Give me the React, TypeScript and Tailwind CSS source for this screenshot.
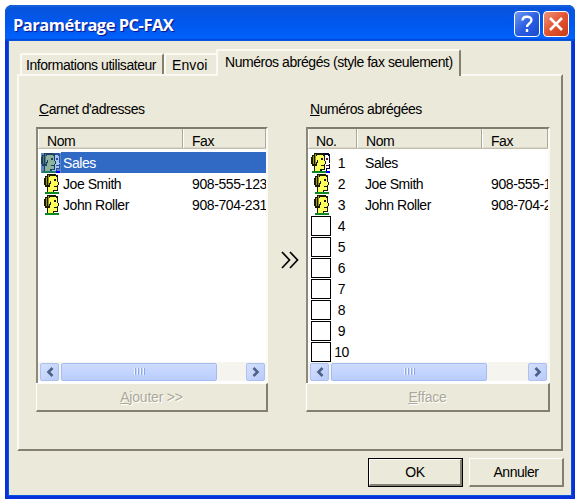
import type { ReactNode } from "react";

type PersonProps = { group?: boolean; selected?: boolean };

function PersonIcon({ group, selected }: PersonProps) {
    const skin = selected ? "#8cb39c" : "#ffff5c";
    const hair = selected ? "#4d7a74" : "#9a9418";
    const line = selected ? "#1d3f66" : "#1a1a00";
    const base = selected ? "#1f7a63" : "#0a8a1e";
    return (
        <svg width="20" height="20" viewBox="0 0 20 20" shapeRendering="crispEdges" className="shrink-0">
            {group && (
                <>
                    <path d="M10 0h8v1h1v15h-3v2h-6z" fill={selected ? "#2a52a4" : "#00002a"} />
                    <path d="M12 2h5v1h1v7h1v1h-1v4h-3v3h-4v-5h1z" fill={selected ? "#a9c6f0" : "#ffffff"} />
                    <path d="M15 5h2v2h-2zM15 12h3v1h-3z" fill={selected ? "#2a52a4" : "#7a1030"} />
                    <path d="M11 18h8v2h-8z" fill="#0000ff" />
                </>
            )}
            <g transform={group ? "translate(-3 0)" : undefined}>
                <path d="M6 0h9v1h2v16h-4v1H6v-5H4v-2H3V4h1V2h2z" fill={line} />
                <path d="M17 8h1v3h-1z" fill={line} />
                <path d="M5 3h1v8H5zM7 1h1v10H7z" fill={hair} />
                <path d="M9 2h6v1h1v5h1v3h-1v5h-4v2H7v-5h2V9H8V3h1z" fill={skin} />
                <path d="M13 5h2v2h-2zM13 12h3v1h-3zM9 7h1v3H9z" fill={line} />
                <path d="M15 5h1v1h-1z" fill={skin} />
                <path d="M4 18h14v2H4z" fill={base} />
            </g>
        </svg>
    );
}

function Arrow({ right }: { right?: boolean }) {
    return (
        <div className="flex h-[18px] w-[19px] shrink-0 items-center justify-center rounded-[2px] border border-[#aebff0] bg-linear-to-br from-[#d5e0fd] to-[#b7cbfb]">
            <svg width="10" height="10" viewBox="0 0 10 10" fill="none" stroke="#4d6185" strokeWidth="2.6">
                <path d={right ? "M2.5 1l4 4-4 4" : "M7.5 1l-4 4 4 4"} />
            </svg>
        </div>
    );
}

function ScrollBar() {
    return (
        <div className="flex h-[19px] shrink-0 items-center bg-[#f5f4ef] pr-px pl-0.5">
            <Arrow />
            <div className="ml-0.5 flex h-[18px] w-[156px] items-center justify-center gap-px rounded-[2px] border border-[#a5bbf1] bg-linear-to-b from-[#cddbff] to-[#b9cdfc]">
                {[0, 1, 2, 3].map((n) => (
                    <div key={n} className="h-[7px] w-[2px] border-r border-[#8ca8e8] bg-[#eef4fe]" />
                ))}
            </div>
            <div className="flex-1" />
            <Arrow right />
        </div>
    );
}

function Column({ className, children }: { className: string; children: ReactNode }) {
    return (
        <div className={`flex h-full items-center border-r border-r-[#aca899] border-l border-l-white pt-[5px] ${className}`}>
            {children}
        </div>
    );
}

function ListBox({ header, children }: { header: ReactNode; children: ReactNode }) {
    return (
        <div className="flex h-[256px] flex-col overflow-hidden border-t-2 border-r-2 border-l-2 border-t-[#7f7d70] border-r-[#fbfaf5] border-l-[#8b897c] bg-white">
            <div className="flex h-5 shrink-0 overflow-hidden border-b border-[#c3bfae] bg-[#ebe9d9] shadow-[inset_0_-1px_0_#dbd8c8]">
                {header}
            </div>
            <div className="flex flex-1 flex-col overflow-hidden pt-[3px]">{children}</div>
            <ScrollBar />
            <div className="h-0.5 shrink-0" />
        </div>
    );
}

function DisabledButton({ children }: { children: ReactNode }) {
    return (
        <button className="flex h-[29px] w-full items-center justify-center border-t border-r-2 border-b-2 border-l border-t-white border-r-[#838072] border-b-[#838072] border-l-white tracking-[-0.2px] text-[#aca899] [text-shadow:1px_1px_0_#fff]">
            {children}
        </button>
    );
}

const contacts = [
    { name: "Sales", fax: "", group: true },
    { name: "Joe Smith", fax: "908-555-123", group: false },
    { name: "John Roller", fax: "908-704-231", group: false },
];

function AddressBook() {
    return (
        <div className="w-[232px]">
            <div className="mb-[9px] pl-[3px] leading-[18px]"><u>C</u>arnet d'adresses</div>
            <ListBox
                header={
                    <>
                        <Column className="w-[145px] pl-[8px]">Nom</Column>
                        <Column className="flex-1 pl-[8px]">Fax</Column>
                    </>
                }
            >
                {contacts.map((c) => (
                    <div key={c.name} className="flex h-[21px] shrink-0 items-center pl-[3px] whitespace-nowrap">
                        <div className={c.group ? "bg-[#5c86c4]" : ""}>
                            <PersonIcon group={c.group} selected={c.group} />
                        </div>
                        <div className={`flex h-[21px] flex-1 items-center pt-px pl-[2px] ${c.group ? "bg-[#316ac5] text-white" : ""}`}>
                            <span className="w-[129px] shrink-0">{c.name}</span>
                            <span className="tracking-[-0.4px]">{c.fax}</span>
                        </div>
                    </div>
                ))}
            </ListBox>
            <DisabledButton><u>A</u>jouter &gt;&gt;</DisabledButton>
        </div>
    );
}

function SpeedDials() {
    return (
        <div className="w-[244px]">
            <div className="mb-[9px] pl-[4px] leading-[18px]"><u>N</u>uméros abrégées</div>
            <ListBox
                header={
                    <>
                        <Column className="w-[49px] pl-[7px]">No.</Column>
                        <Column className="w-[125px] pl-[8px]">Nom</Column>
                        <Column className="flex-1 pl-[8px]">Fax</Column>
                    </>
                }
            >
                {Array.from({ length: 10 }, (_, i) => (
                    <div key={i} className="flex h-[21px] shrink-0 items-center pl-[3px] whitespace-nowrap">
                        {contacts[i] ? (
                            <PersonIcon group={contacts[i].group} />
                        ) : (
                            <div className="size-5 shrink-0 border border-black" />
                        )}
                        <span className="w-[21px] shrink-0 pt-px text-center">{i + 1}</span>
                        <span className="ml-[13px] w-[126px] shrink-0 pt-px">{contacts[i]?.name}</span>
                        <span className="pt-px tracking-[-0.4px]">{contacts[i]?.fax}</span>
                    </div>
                ))}
            </ListBox>
            <DisabledButton><u>E</u>fface</DisabledButton>
        </div>
    );
}

function TitleBar() {
    return (
        <div className="flex h-9 shrink-0 items-center rounded-t-[7px] bg-linear-to-b from-[#0a52d8] via-[#0058ee] to-[#0062ff] pr-[6px] pl-2 shadow-[inset_0_2px_1px_#1660dc,inset_0_-2px_1px_#0048d8]">
            <h1 className="flex-1 pt-[3px] font-['Open_Sans','Noto_Sans',sans-serif] text-[16.5px] font-bold tracking-[-0.5px] text-white [text-shadow:1px_1px_1px_#0f1089]">
                Paramétrage PC-FAX
            </h1>
            <button className="mt-0.5 mr-[3px] flex size-[26px] items-center justify-center rounded-[4px] border border-white bg-linear-to-br from-[#6f98f4] via-[#2c5ee2] to-[#164ad0]">
                <svg width="16" height="20" viewBox="0 0 16 20" fill="none" stroke="#fff" strokeWidth="2.4">
                    <path d="M3.5 6.5C3.5 1.5 12.5 1.5 12.5 6c0 3.5-4.5 3.5-4.5 7M8 15v3" />
                </svg>
            </button>
            <button className="mt-0.5 flex size-[26px] items-center justify-center rounded-[4px] border border-white bg-linear-to-br from-[#ee9278] via-[#e2532f] to-[#cb3a16]">
                <svg width="16" height="16" viewBox="0 0 16 16" stroke="#fff" strokeWidth="2.6">
                    <path d="M2 2l12 12M14 2L2 14" />
                </svg>
            </button>
        </div>
    );
}

function Tabs() {
    return (
        <div className="flex h-[25px] items-end pl-[3px]">
            <div className="flex h-[21px] w-[144px] items-center rounded-t-[2px] border-t-2 border-r-2 border-l-2 border-t-[#faf9f4] border-r-[#838072] border-l-[#faf9f4] pl-1 whitespace-nowrap">
                Informations utilisateur
            </div>
            <div className="flex h-[21px] w-[52px] items-center border-t-2 border-l-2 border-[#faf9f4] pl-[6px] tracking-[0.1px]">
                Envoi
            </div>
            <div className="z-10 -mb-[2px] flex h-[27px] w-[245px] items-start rounded-t-[2px] border-t-2 border-r-2 border-l-2 border-t-[#faf9f4] border-r-[#838072] border-l-[#faf9f4] bg-[#ebe9d9] pt-px pl-[7px] whitespace-nowrap">
                Numéros abrégés (style fax seulement)
            </div>
        </div>
    );
}

export default function App() {
    return (
        <div className="h-[501px] w-[578px] overflow-hidden bg-white pt-[5px] pl-[5px] font-['Liberation_Sans',Arial,sans-serif] text-[14px] leading-5 tracking-[-0.45px] text-black">
            <div className="flex h-[494px] w-[570px] flex-col rounded-t-[7px] bg-[#0831d9]">
                <TitleBar />
                <div className="mx-1 mb-1 flex-1 bg-[#ebe9d9] px-2 pt-2 shadow-[0_0_0_1px_#0855dd]">
                    <Tabs />
                    <div className="flex h-[377px] border-t-2 border-r-2 border-b-2 border-l-2 border-t-[#faf9f4] border-r-[#838072] border-b-[#838072] border-l-[#faf9f4] pt-[24px] pl-[17px]">
                        <AddressBook />
                        <div className="flex w-[38px] justify-center pt-[151px] pl-[6px]">
                            <svg width="18" height="18" viewBox="0 0 18 18" fill="none" stroke="#000" strokeWidth="1.7">
                                <path d="M1 1l7.5 8L1 17M9 1l7.5 8L9 17" />
                            </svg>
                        </div>
                        <SpeedDials />
                    </div>
                    <div className="-mr-px flex justify-end gap-[6px] pt-[7px]">
                        <button className="h-[29px] w-[95px] border border-black">
                            <span className="flex size-full items-center justify-center border-t border-r-2 border-b-2 border-l border-t-white border-r-[#838072] border-b-[#838072] border-l-white">OK</span>
                        </button>
                        <button className="h-[29px] w-[95px] border-t border-r-2 border-b-2 border-l border-t-white border-r-[#838072] border-b-[#838072] border-l-white">
                            Annuler
                        </button>
                    </div>
                </div>
            </div>
        </div>
    );
}
